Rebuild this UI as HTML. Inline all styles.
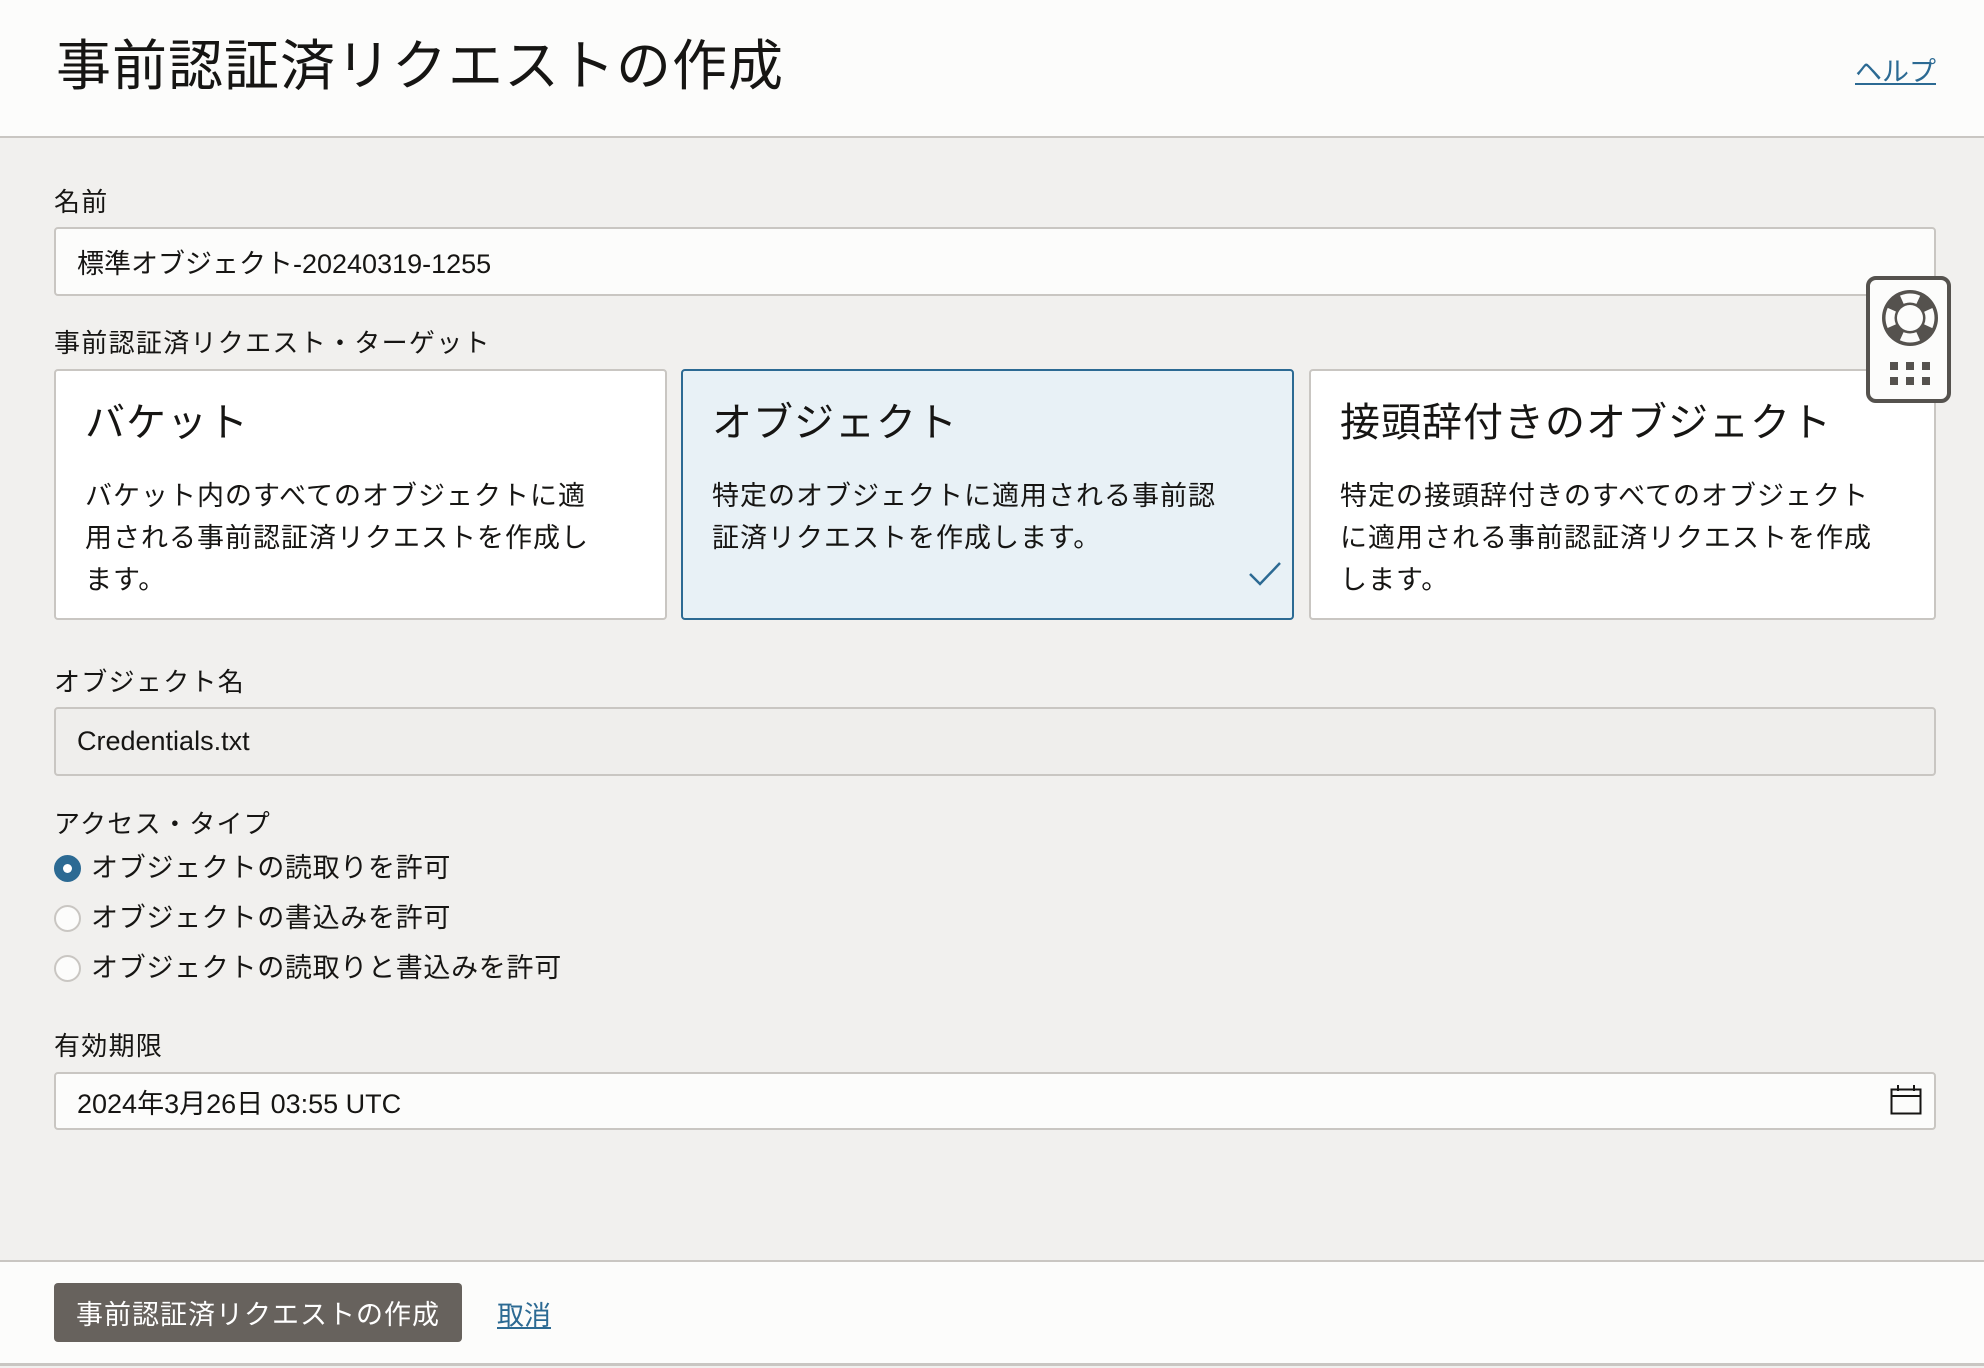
<!DOCTYPE html>
<html><head><meta charset="utf-8"><style>
*{box-sizing:border-box;margin:0;padding:0}
body{width:1984px;height:1368px;background:#f1f0ee;font-family:"Liberation Sans","Noto Sans CJK JP",sans-serif;color:#161513;position:relative;overflow:hidden}
.abs{position:absolute}
.hdr{left:0;top:0;width:1984px;height:138px;background:#fcfcfb;border-bottom:2px solid #c9c6c2}
.title{left:56px;top:30px;font-size:55px;line-height:72px;letter-spacing:1px}
.help{left:1855px;top:50px;font-size:27px;color:#2c6a93;text-decoration:underline}
.lbl{font-size:26px;line-height:34px;letter-spacing:1.3px}
.inp{left:54px;width:1882px;background:#fcfcfb;border:2px solid #c9c6c2;border-radius:4px;font-size:27px;padding-left:21px;display:flex;align-items:center}
.card{top:369px;height:251px;background:#fff;border:2px solid #c9c6c2;border-radius:4px;padding:26px 0 0 29px}
.card.sel{background:#e8f1f6;border-color:#2c6a93}
.card h3{font-weight:normal;font-size:40px;line-height:52px;letter-spacing:1px}
.card p{margin-top:26px;font-size:27px;line-height:42px;letter-spacing:1px;white-space:nowrap}
.radio{left:54px;width:27px;height:27px;border-radius:50%;border:2px solid #c9c6c2;background:#fcfcfb}
.radio.on{background:#2c6a93;border-color:#2c6a93}
.radio.on:after{content:"";position:absolute;left:7px;top:7px;width:9px;height:9px;border-radius:50%;background:#fff}
.rt{left:91px;font-size:27px;letter-spacing:0.7px;line-height:36px}
.ftr{left:0;top:1260px;width:1984px;height:106px;background:#fcfcfb;border-top:2px solid #c9c6c2;border-bottom:3px solid #c9c6c2}
</style></head><body>
<div class="abs hdr"></div>
<div class="abs title">事前認証済リクエストの作成</div>
<div class="abs help">ヘルプ</div>

<div class="abs lbl" style="left:54px;top:185px">名前</div>
<div class="abs inp" style="top:227px;height:69px">標準オブジェクト-20240319-1255</div>

<div class="abs lbl" style="left:54px;top:326px">事前認証済リクエスト・ターゲット</div>
<div class="abs card" style="left:54px;width:613px"><h3>バケット</h3><p>バケット内のすべてのオブジェクトに適<br>用される事前認証済リクエストを作成し<br>ます。</p></div>
<div class="abs card sel" style="left:681px;width:613px"><h3>オブジェクト</h3><p>特定のオブジェクトに適用される事前認<br>証済リクエストを作成します。</p>
<svg class="abs" style="left:565px;top:190px" width="34" height="26" viewBox="0 0 34 26"><path d="M2 13 L12 23 L32 2" fill="none" stroke="#2c6a93" stroke-width="2.5"/></svg></div>
<div class="abs card" style="left:1309px;width:627px"><h3>接頭辞付きのオブジェクト</h3><p>特定の接頭辞付きのすべてのオブジェクト<br>に適用される事前認証済リクエストを作成<br>します。</p></div>

<div class="abs" style="left:1866px;top:276px;width:85px;height:127px;background:#fcfcfb;border:4px solid #55524e;border-radius:10px">
<svg class="abs" style="left:11px;top:9px" width="58" height="58" viewBox="0 0 58 58"><circle cx="29" cy="29" r="28" fill="#55524e"/><circle cx="29" cy="29" r="20" fill="none" stroke="#fcfcfb" stroke-width="9" stroke-dasharray="17 14.4" stroke-dashoffset="8.5"/><circle cx="29" cy="29" r="13" fill="#fcfcfb"/></svg>
<svg class="abs" style="left:20px;top:82px" width="42" height="24" viewBox="0 0 42 24"><g fill="#55524e"><rect x="0" y="0" width="8" height="8"/><rect x="16" y="0" width="8" height="8"/><rect x="32" y="0" width="8" height="8"/><rect x="0" y="15" width="8" height="8"/><rect x="16" y="15" width="8" height="8"/><rect x="32" y="15" width="8" height="8"/></g></svg>
</div>

<div class="abs lbl" style="left:54px;top:665px">オブジェクト名</div>
<div class="abs inp" style="top:707px;height:69px;background:#efeeec">Credentials.txt</div>

<div class="abs lbl" style="left:54px;top:807px">アクセス・タイプ</div>
<div class="abs radio on" style="top:855px"></div><div class="abs rt" style="top:850px">オブジェクトの読取りを許可</div>
<div class="abs radio" style="top:905px"></div><div class="abs rt" style="top:900px">オブジェクトの書込みを許可</div>
<div class="abs radio" style="top:955px"></div><div class="abs rt" style="top:950px">オブジェクトの読取りと書込みを許可</div>

<div class="abs lbl" style="left:54px;top:1029px">有効期限</div>
<div class="abs inp" style="top:1072px;height:58px">2024年3月26日 03:55 UTC</div>
<svg class="abs" style="left:1890px;top:1085px" width="32" height="30" viewBox="0 0 32 30"><rect x="1.5" y="4.5" width="29" height="24" fill="none" stroke="#161513" stroke-width="2"/><line x1="1.5" y1="11" x2="30.5" y2="11" stroke="#161513" stroke-width="2"/><line x1="8" y1="0" x2="8" y2="6" stroke="#161513" stroke-width="2"/><line x1="24" y1="0" x2="24" y2="6" stroke="#161513" stroke-width="2"/></svg>

<div class="abs ftr"></div>
<div class="abs" style="left:54px;top:1283px;width:408px;height:59px;background:#67625d;border-radius:4px;color:#fff;font-size:27px;letter-spacing:1px;display:flex;align-items:center;justify-content:center">事前認証済リクエストの作成</div>
<div class="abs" style="left:497px;top:1294px;font-size:27px;color:#2c6a93;text-decoration:underline">取消</div>
</body></html>
